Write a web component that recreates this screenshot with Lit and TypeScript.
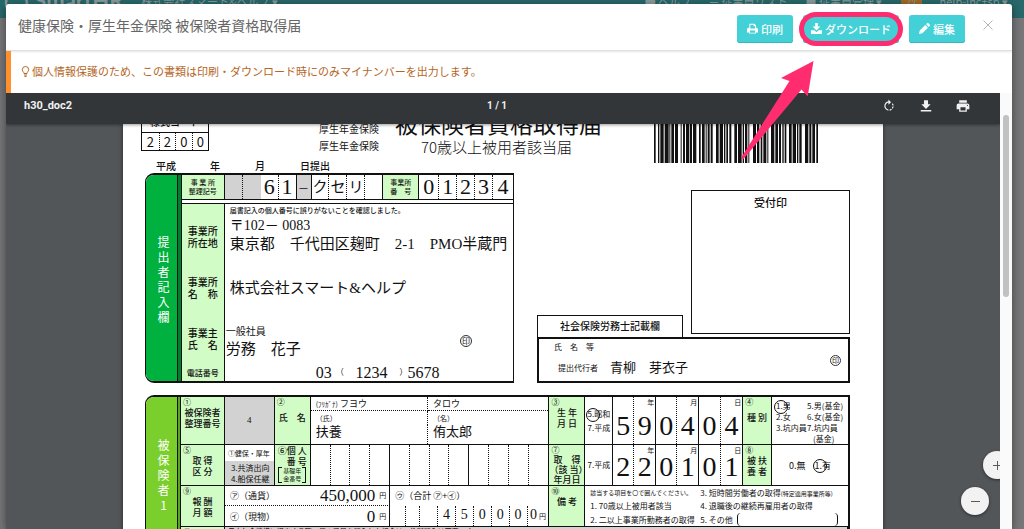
import { LitElement, html, css, svg } from "lit";
import { customElement } from "lit/decorators.js";

const sharedText = css`
  * { box-sizing: border-box; }
  .mincho { font-family: "Liberation Serif", "Noto Sans CJK JP", serif; font-weight: 400; color: #111; }
`;

/* Bars of the form's identification code: [offset, width] */
const BARS: [number, number][] = [
  [0, 5], [12, 4], [19, 10], [32, 12], [46, 3], [52, 8], [63, 9], [80, 3], [87, 6], [96, 10],
  [108, 6], [117, 10], [135, 5], [144, 8], [155, 3], [161, 6], [170, 6], [186, 8], [197, 10],
  [210, 4], [217, 5], [226, 6], [241, 8], [252, 11], [266, 4], [273, 7], [283, 3], [297, 9],
  [309, 7], [320, 5], [328, 9], [340, 3], [351, 10], [364, 8], [375, 6], [385, 4], [392, 5],
  [405, 8], [416, 10], [429, 4], [436, 7], [453, 10], [466, 6], [475, 8], [487, 5],
];

@customElement("form-sheet")
class FormSheet extends LitElement {
  static styles = [sharedText, css`
    :host {
      display: block;
      width: 100%;
      max-width: 760px;
      margin: -16px auto 0;
      padding: 0 33px 0 22px;
      box-sizing: border-box;
      background: #fff;
      color: #111;
      font: 500 10px/12px "Noto Sans CJK JP", sans-serif;
      box-shadow: 0 0 4px rgba(0, 0, 0, 0.5);
      white-space: nowrap;
    }
    .head {
      display: grid;
      grid-template-columns: 64fr 110fr 76fr 259fr 164fr 32fr;
      grid-template-rows: 43px 8px 14px;
    }
    .code { margin-left: -4px; border: 1px solid #111; text-align: center; }
    .code-name { line-height: 23px; border-bottom: 1px solid #111; padding-top: 1px; height: 24px; }
    .code-digits { display: grid; grid-template-columns: repeat(4, 1fr); font-size: 13px; line-height: 17px; font-weight: 400; }
    .code-digits span + span { border-left: 1px dotted #111; }
    .kinds { grid-column: 3; line-height: 17px; padding-top: 12px; font-weight: 400; }
    .titles { grid-column: 4; }
    h1 { margin: 0; font-size: 23px; line-height: 31px; font-weight: 400; }
    h2 { margin: 0; padding-left: 26px; font-size: 15px; line-height: 15px; font-weight: 300; }
    .barcode { grid-column: 5; grid-row: 1 / 4; width: 100%; height: 55px; display: block; }
    .date { grid-column: 1 / 5; grid-row: 3; display: grid; grid-template-columns: 54fr 45fr 45fr 354fr; padding-left: 11px; line-height: 14px; }

    .upper { display: grid; grid-template-columns: 369fr 23fr 313fr; }
    .office {
      display: grid;
      grid-template-columns: 31fr 5fr 332fr;
      border: 1px solid #111;
      border-width: 2px 1px 2px 1px;
      border-radius: 9px 0 0 9px;
      overflow: hidden;
      height: 210px;
    }
    .band {
      display: flex;
      justify-content: center;
      align-items: center;
      background: #00b140;
      color: #fff;
      font-size: 12px;
      line-height: 15px;
      font-weight: 400;
      padding-left: 4px;
    }
    .band p { margin: 0; width: 12px; white-space: normal; word-break: break-all; text-align: center; }
    .stripe { background: #00802e; border: solid #111; border-width: 0 1px; }
    .row1 {
      display: grid;
      grid-template-columns: 43fr 18fr 18fr 18fr 18fr 15fr 18fr 18fr 18fr 18fr 36fr 20fr 18fr 18fr 18fr 20fr;
      height: 25px;
      border-bottom: 1px solid #111;
    }
    .row1 > * { display: flex; align-items: center; justify-content: center; min-width: 0; border-right: 1px solid #111; }
    .row1 > .dot { border-right: 1px dotted #111; }
    .row1 > .open { border-right: 0; }
    .row1 .label { font-size: 7px; line-height: 9px; }
    .label { background: #d2fcc6; text-align: center; }
    .grey { background: #d2d2d2; }
    .num { font-size: 22px; line-height: 24px; }
    .kana { font-size: 15px; }
    .body {
      margin-top: 3px;
      border-top: 1px solid #111;
      display: grid;
      grid-template-columns: 43fr 289fr;
      grid-template-rows: 57px 54px 48px 20px;
    }
    .body > .label { border-right: 1px solid #111; display: flex; flex-direction: column; justify-content: center; line-height: 12px; }
    .body > .label.first { padding-top: 8px; }
    .body > .small { font-size: 8px; }
    .val { padding-left: 5px; }
    .tight { padding-left: 1px; }
    .tiny { font-size: 7px; line-height: 13px; }
    .m12 { font-size: 13px; line-height: 18px; }
    .m14 { font-size: 14px; line-height: 18px; }
    .m15 { font-size: 15px; line-height: 18px; }
    .val.mid { display: flex; align-items: center; }
    .owner { display: flex; justify-content: space-between; align-items: center; padding: 4px 41px 0 0; }
    .owner.tight { padding-left: 1px; }
    .owner .post { line-height: 16px; }
    .seal { display: inline-flex; align-items: center; justify-content: center; width: 12px; height: 12px; border: 1px solid #333; border-radius: 50%; font-size: 8px; line-height: 10px; font-weight: 400; }
    .phone { display: grid; grid-template-columns: 20fr 20fr 44fr 8fr 106fr; padding-left: 91px; line-height: 20px; font-size: 16px; }
    .phone .paren { font-size: 8px; }

    .side { grid-column: 3; display: grid; grid-template-columns: 146fr 8fr 159fr; grid-template-rows: 17px 125px 19px 3px 46px; }
    .stamp { grid-area: 2 / 3 / 4 / 4; border: 1px solid #111; text-align: center; font-size: 11px; line-height: 22px; }
    .tab { grid-area: 3 / 1 / 5 / 2; border: 1px solid #111; border-bottom: 0; text-align: center; line-height: 20px; }
    .agent { grid-area: 5 / 1 / 6 / 4; border: 2px solid #111; display: grid; grid-template-columns: 71fr 220fr 18fr; grid-template-rows: 16px 1fr; align-items: center; font-size: 8px; font-weight: 400; }
    .agent .who { grid-column: 1; padding-left: 15px; }
    .agent .role { grid-column: 1; padding-left: 19px; }
    .agent .name { font-size: 13px; }
    .agent .seal { width: 11px; height: 11px; font-size: 7px; grid-area: 1 / 3 / 3 / 4; justify-self: start; }

    .person {
      display: grid;
      grid-template-columns: 31fr 4fr 44fr 50fr 36fr 239fr 36fr 28fr 43fr 43fr 44fr 29fr 76fr;
      grid-template-rows: 48px 41px 41px 32px;
      margin-top: 12px;
      border: solid #111;
      border-width: 2px 2px 0 1px;
      border-radius: 9px 0 0 0;
      overflow: hidden;
      font-size: 9px;
      line-height: 11px;
    }
    .person .band { grid-row: 1 / 5; background: #7bcf2c; align-items: flex-start; padding-top: 40px; }
    .person .stripe { grid-row: 1 / 5; background: #5da51e; }
    .cell { border: solid #111; border-width: 0 1px 1px 0; min-width: 0; }
    .last { border-right: 0; }
    .mark { display: block; line-height: 10px; font-size: 8px; text-align: left; padding-left: 2px; font-weight: 400; }
    .lines { display: block; }
    .one { line-height: 22px; }
    .dense { line-height: 10px; }
    .centre { display: flex; align-items: center; justify-content: center; }
    .opts { display: flex; flex-direction: column; font-size: 8px; line-height: 11px; font-weight: 400; }
    .opts .white { line-height: 16px; padding-left: 3px; font-size: 7px; }
    .opts .grey { flex: 1; padding: 1px 0 0 6px; }
    .bracket { display: flex; justify-content: center; gap: 1px; font-size: 6px; line-height: 8px; font-weight: 400; }
    .bracket::before, .bracket::after { content: ""; width: 3px; border: 1px solid #111; }
    .bracket::before { border-right: 0; }
    .bracket::after { border-left: 0; }
    .names { display: grid; grid-template-columns: 118fr 121fr; grid-template-rows: 14px 14px 19px; }
    .names > * { padding-left: 5px; }
    .names > :nth-child(odd) { border-right: 1px dotted #111; }
    .names .ruby { border-bottom: 1px dotted #111; font-weight: 400; line-height: 14px; }
    .names .hint { font-size: 7px; line-height: 14px; font-weight: 400; }
    .names .m12 { line-height: 14px; }
    .digits { display: grid; grid-template-columns: repeat(12, 1fr); }
    .digits span { border-right: 1px dotted #111; }
    .digits span:nth-child(4n) { border-right-style: solid; }
    .digits span:last-child { border-right: 0; }
    .era { display: flex; flex-direction: column; justify-content: center; align-items: center; font-size: 8px; line-height: 14px; font-weight: 400; }
    .ring { position: relative; }
    .ring::after { content: ""; position: absolute; left: -2px; top: 50%; width: 12px; height: 12px; margin-top: -6px; border: 1px solid #111; border-radius: 50%; }
    .pair { display: grid; grid-template-columns: 1fr 1fr; grid-template-rows: 100%; }
    .pair .big { grid-row: 1; align-self: end; text-align: center; font-size: 28px; line-height: 36px; }
    .pair .a { grid-column: 1; border-right: 1px dotted #111; height: 100%; display: flex; align-items: flex-end; justify-content: center; }
    .pair .b { grid-column: 2; }
    .pair .unit { grid-area: 1 / 2; justify-self: end; align-self: start; font-size: 7px; line-height: 10px; padding-right: 1px; font-weight: 400; }
    .sex { display: grid; grid-template-columns: 31fr 41fr; padding: 3px 0 0 4px; font-size: 8px; line-height: 11px; font-weight: 400; align-content: start; }
    .sex .end { grid-column: 2; padding-left: 6px; }
    .dep { gap: 9px; font-weight: 400; }
    .pay { grid-column: 4 / 7; display: grid; grid-template-columns: 166fr 159fr; grid-template-rows: 20px 20px; }
    .line { display: flex; align-items: center; padding: 0 3px 0 5px; border-right: 1px solid #111; font-weight: 400; }
    .line.top { border-bottom: 1px dotted #111; }
    .line .amount { margin-left: auto; font-size: 17px; }
    .yen { font-size: 7px; margin-left: 4px; }
    .total { grid-area: 1 / 2 / 3 / 3; display: flex; flex-direction: column; justify-content: space-between; padding-left: 5px; font-weight: 400; }
    .total .caption { line-height: 20px; }
    .sum { display: grid; grid-template-columns: 10fr 14fr 18fr 18fr 18fr 18fr 18fr 18fr 22fr; font-size: 14px; line-height: 18px; text-align: center; }
    .sum > * { min-width: 0; }
    .sum > * + * { border-left: 1px dotted #111; }
    .sum .yen { font-size: 7px; margin-left: 2px; }
    .notes { grid-column: 8 / 14; display: grid; grid-template-columns: 110fr 148fr; grid-template-rows: 13px 14px 13px; font-size: 8px; line-height: 13px; padding-left: 5px; font-weight: 400; }
    .notes .lead { font-size: 6px; }
    .notes small { font-size: 6px; }
    .other { display: flex; gap: 4px; padding-right: 10px; }
    .other i { flex: 1; border: 1px solid #111; border-width: 0 1px; border-radius: 4px; }
    .foot { grid-column: 4 / 14; background: #d2d2d2; font-size: 7px; line-height: 9px; padding-left: 3px; }
  `];

  private date(a: string, b: string, unit: string) {
    return html`<div class="cell pair">
      <span class="big a mincho">${a}</span><span class="unit">${unit}</span><span class="big b mincho">${b}</span>
    </div>`;
  }

  render() {
    return html`
      <header class="head">
        <div class="code">
          <div class="code-name">様式コード</div>
          <div class="code-digits">${[..."2200"].map((d) => html`<span>${d}</span>`)}</div>
        </div>
        <div class="kinds">厚生年金保険<br />厚生年金保険</div>
        <div class="titles"><h1>被保険者資格取得届</h1><h2>70歳以上被用者該当届</h2></div>
        <svg class="barcode" viewBox="0 0 492 55" preserveAspectRatio="none" aria-hidden="true">
          ${BARS.map(([x, w]) => svg`<rect x=${x} y="0" width=${w} height="55" fill="#111" />`)}
        </svg>
        <div class="date"><span>平成</span><span>年</span><span>月</span><span>日提出</span></div>
      </header>

      <div class="upper">
        <section class="office">
          <div class="band"><p>提出者記入欄</p></div>
          <div class="stripe"></div>
          <div>
            <div class="row1">
              <div class="label">事 業 所<br />整理記号</div>
              <span class="grey dot"></span><span class="grey open"></span>
              <span class="num mincho dot">6</span><span class="num mincho">1</span>
              <span class="grey">—</span>
              <span class="kana mincho dot">ク</span><span class="kana mincho dot">セ</span><span class="kana mincho dot">リ</span>
              <span></span>
              <div class="label">事業所<br />番　号</div>
              <span class="num mincho dot">0</span><span class="num mincho dot">1</span><span class="num mincho dot">2</span>
              <span class="num mincho dot">3</span><span class="num mincho open">4</span>
            </div>
            <div class="body">
              <div class="label first">事業所<br />所在地</div>
              <div class="val">
                <div class="tiny">届書記入の個人番号に誤りがないことを確認しました。</div>
                <div class="m14 mincho">〒102－ 0083</div>
                <div class="m15 mincho">東京都　千代田区麹町　2-1　PMO半蔵門</div>
              </div>
              <div class="label">事業所<br />名　称</div>
              <div class="val mid m15 mincho">株式会社スマート&amp;ヘルプ</div>
              <div class="label">事業主<br />氏　名</div>
              <div class="tight owner">
                <div class="mincho"><div class="post">一般社員</div><div class="m15">労務　花子</div></div>
                <span class="seal">印</span>
              </div>
              <div class="label small">電話番号</div>
              <div class="phone mincho">
                <span>03</span><span class="paren">（</span><span>1234</span><span class="paren">）</span><span>5678</span>
              </div>
            </div>
          </div>
        </section>

        <section class="side">
          <div class="stamp">受付印</div>
          <div class="tab">社会保険労務士記載欄</div>
          <div class="agent">
            <span class="who">氏　名　等</span>
            <span class="role">提出代行者</span>
            <span class="name mincho">青柳　芽衣子</span>
            <span class="seal">印</span>
          </div>
        </section>
      </div>

      <section class="person">
        <div class="band"><p>被保険者1</p></div>
        <div class="stripe"></div>

        <div class="cell label"><span class="mark">①</span><span class="lines">被保険者<br />整理番号</span></div>
        <div class="cell grey centre mincho">4</div>
        <div class="cell label"><span class="mark">②</span><span class="lines one">氏　名</span></div>
        <div class="cell names">
          <span class="ruby"><span class="hint">(ﾌﾘｶﾞﾅ)</span> フヨウ</span><span class="ruby">タロウ</span>
          <span class="hint">（氏）</span><span class="hint">（名）</span>
          <span class="m12 mincho">扶養</span><span class="m12 mincho">侑太郎</span>
        </div>
        <div class="cell label"><span class="mark">③</span><span class="lines">生 年<br />月 日</span></div>
        <div class="cell era"><span class="ring">5.昭和</span><span>7.平成</span></div>
        ${this.date("5", "9", "年")}${this.date("0", "4", "月")}${this.date("0", "4", "日")}
        <div class="cell label"><span class="mark">④</span><span class="lines one">種 別</span></div>
        <div class="cell last sex">
          <span class="ring">1.男</span><span>5.男(基金)</span>
          <span>2.女</span><span>6.女(基金)</span>
          <span>3.坑内員</span><span>7.坑内員</span>
          <span class="end">(基金)</span>
        </div>

        <div class="cell label"><span class="mark">⑤</span><span class="lines">取 得<br />区 分</span></div>
        <div class="cell opts"><div class="white">①健保・厚年</div><div class="grey">3.共済出向<br />4.船保任継</div></div>
        <div class="cell label">
          <span class="lines">⑥個 人<br />　番 号</span>
          <span class="bracket">基礎年<br />金番号</span>
        </div>
        <div class="cell digits">${Array.from({ length: 12 }, () => html`<span></span>`)}</div>
        <div class="cell label dense"><span class="mark">⑦</span>取　得<br />（該 当）<br />年月日</div>
        <div class="cell era"><span>7.平成</span></div>
        ${this.date("2", "2", "年")}${this.date("0", "1", "月")}${this.date("0", "1", "日")}
        <div class="cell label"><span class="mark">⑧</span><span class="lines">被 扶<br />養 者</span></div>
        <div class="cell last centre dep"><span>0.無</span><span class="ring">1.有</span></div>

        <div class="cell label"><span class="mark">⑨</span><span class="lines">報 酬<br />月 額</span></div>
        <div class="cell pay">
          <div class="line top">㋐（通貨）<span class="amount mincho">450,000</span><span class="yen">円</span></div>
          <div class="total">
            <span class="caption">㋒（合計 ㋐+㋑）</span>
            <div class="sum mincho">
              <span></span><span></span><span></span>
              ${[..."45000"].map((d) => html`<span>${d}</span>`)}
              <span>0<span class="yen">円</span></span>
            </div>
          </div>
          <div class="line">㋑（現物）<span class="amount mincho">0</span><span class="yen">円</span></div>
        </div>
        <div class="cell label"><span class="mark">⑩</span><span class="lines">備 考</span></div>
        <div class="cell last notes">
          <span class="lead">該当する項目を〇で囲んでください。</span><span>3. 短時間労働者の取得<small>(特定適用事業所等)</small></span>
          <span>1. 70歳以上被用者該当</span><span>4. 退職後の継続再雇用者の取得</span>
          <span>2. 二以上事業所勤務者の取得</span><span class="other">5. その他<i></i></span>
        </div>

        <div class="cell label"><span class="mark">⑪</span></div>
        <div class="cell foot">日本年金機構に提出する際、個人番号を記入した場合は、住所記入は不要です。</div>
      </section>
    `;
  }
}

@customElement("app-root")
class AppRoot extends LitElement {
  static styles = [sharedText, css`
    :host {
      display: flex;
      flex-direction: column;
      position: relative;
      height: 100vh;
      overflow: hidden;
      background: #77777a;
      font: 400 11px/16px "Noto Sans CJK JP", sans-serif;
      white-space: nowrap;
    }
    .topbar {
      display: flex;
      align-items: flex-start;
      gap: 18px;
      height: 18px;
      flex: none;
      padding: 0 16px 0 4px;
      background: #28696b;
      color: #8b9c9d;
      line-height: 2px;
    }
    .brand { font: 700 22px/1px "Lato", sans-serif; }
    .topbar .push { margin-left: auto; }
    .badge { background: #a36a28; height: 4px; padding: 0 5px; line-height: 0; }
    .modal {
      flex: 1;
      min-height: 0;
      display: flex;
      flex-direction: column;
      margin: -14px 12px 0 6px;
      background: #fff;
      border-radius: 3px 3px 0 0;
      box-shadow: 0 2px 10px rgba(0, 0, 0, 0.45);
      overflow: hidden;
    }
    .modal-head {
      display: flex;
      align-items: center;
      gap: 10px;
      height: 47px;
      flex: none;
      padding: 3px 18px 0 12px;
      border-bottom: 1px solid #e0e0e0;
      box-shadow: 0 1px 2px rgba(0, 0, 0, 0.1);
    }
    .title { margin: 0 auto 0 0; font-size: 14px; line-height: 20px; font-weight: 400; color: #666; padding-bottom: 8px; }
    button { font: inherit; border: 0; padding: 0; margin: 0; cursor: pointer; }
    .act {
      position: relative;
      display: flex;
      align-items: center;
      gap: 3px;
      height: 28px;
      padding: 0 10px;
      border-radius: 3px;
      background: #43d0d6;
      color: #fff;
      font-weight: 500;
      line-height: 16px;
      box-shadow: inset 0 -1px 0 #35b8be;
    }
    .act svg { width: 11px; height: 11px; fill: currentColor; }
    .act.hot::after { content: ""; position: absolute; inset: -3px -4px; border: 5px solid #ff2d6f; border-radius: 17px; }
    .act.wide { padding: 0 8px; }
    .close { background: none; width: 12px; height: 12px; margin: 0 0 7px 7px; }
    .close svg { display: block; width: 12px; height: 12px; stroke: #b8b8b8; stroke-width: 1; }
    .notice {
      display: flex;
      align-items: center;
      gap: 2px;
      height: 42px;
      flex: none;
      margin: 0;
      padding: 0 0 2px 10px;
      border-left: 5px solid #ff902b;
      color: #b5661f;
    }
    .notice svg { width: 9px; height: 11px; fill: none; stroke: currentColor; }
    .frame { flex: 1; min-height: 0; display: flex; }
    .viewer { flex: 1; min-width: 0; position: relative; overflow: hidden; background: #525659; }
    .toolbar {
      position: relative;
      z-index: 1;
      display: grid;
      grid-template-columns: 1fr auto 1fr;
      align-items: center;
      height: 31px;
      padding: 0 30px 6px 18px;
      background: #323639;
      color: #f1f1f1;
      font: 700 11px/14px "Roboto", sans-serif;
      box-shadow: 0 1px 3px rgba(0, 0, 0, 0.4);
    }
    .toolbar .pages { font-size: 10px; }
    .tools { display: flex; justify-content: flex-end; gap: 23px; }
    .tools button { background: none; color: inherit; }
    .tools svg { display: block; width: 14px; height: 14px; fill: currentColor; }
    .zoom { position: absolute; z-index: 2; width: 28px; height: 28px; border-radius: 50%; background: #f2f2f2; box-shadow: 0 1px 3px rgba(0, 0, 0, 0.5); display: flex; align-items: center; justify-content: center; }
    .zoom svg { width: 11px; height: 11px; stroke: #5a5a5a; stroke-width: 1; fill: none; }
    .in { right: -11px; bottom: 50px; }
    .out { right: 11px; bottom: 14px; }
    .track { width: 12px; padding: 22px 3px 0; background: #fafafa; }
    .thumb { height: 182px; border-radius: 3px; background: #c1c1c1; }
    .arrow { position: absolute; left: 741px; top: 61px; width: 73px; height: 99px; fill: #ff2d6f; z-index: 3; pointer-events: none; }
  `];

  render() {
    return html`
      <header class="topbar">
        <span class="brand">◯ SmartHR</span><span>株式会社スマート&amp;ヘルプ ▾</span>
        <span class="push">● ヘルプ</span><span>☰ 従業員リスト</span><span>■ 従業員管理 ▾</span>
        <span class="badge">ﾌﾘ</span><span>help-inc+sp ▾</span>
      </header>
      <main class="modal">
        <div class="modal-head">
          <h1 class="title">健康保険・厚生年金保険 被保険者資格取得届</h1>
          <button class="act" type="button">
            <svg viewBox="0 0 14 14"><path fill-rule="evenodd" d="M3 1h6.5L11.5 3v3H12a2 2 0 0 1 2 2v4h-2.5v1.5h-9V12H0V8a2 2 0 0 1 2-2h1zM4.2 2.2V7h6V4H8.5V2.2zM3.7 9.5v2.8h6.6V9.5z" /></svg>印刷
          </button>
          <button class="act wide hot" type="button">
            <svg viewBox="0 0 14 14"><path d="M5.3 0h3.4v4.5H12L7 9.5l-5-5h3.3zM0 9.2h4.3L7 11.7l2.7-2.5H14V14H0z" /></svg>ダウンロード
          </button>
          <button class="act" type="button">
            <svg viewBox="0 0 14 14"><path d="M0 14l.9-4.3L8 2.6 11.4 6l-7.1 7.1zM9 1.6l1.3-1.2a1.3 1.3 0 0 1 1.8 0l1.5 1.5a1.3 1.3 0 0 1 0 1.8L12.4 5z" /></svg>編集
          </button>
          <button class="close" type="button" aria-label="閉じる"><svg viewBox="0 0 12 12"><path d="M1.5 1.5l9 9M10.5 1.5l-9 9" /></svg></button>
        </div>
        <p class="notice">
          <svg viewBox="0 0 9 11"><path d="M3 7.5C3 6 1.3 5.500 1.3 3.700a3.2 3.2 0 0 1 6.4 0C7.700 5.500 6 6 6 7.500zM3 9h3M3.500 10.500h2" /></svg>
          個人情報保護のため、この書類は印刷・ダウンロード時にのみマイナンバーを出力します。
        </p>
        <div class="frame">
          <div class="viewer">
            <div class="toolbar">
              <span>h30_doc2</span><span class="pages">1 / 1</span>
              <div class="tools">
                <button type="button" aria-label="回転">
                  <svg viewBox="0 0 24 24"><path d="M15.55 5.55L11 1v3.07C7.06 4.56 4 7.92 4 12s3.05 7.44 7 7.93v-2.02c-2.84-.48-5-2.94-5-5.91s2.16-5.43 5-5.91V10l4.55-4.45zM19.93 11c-.17-1.39-.72-2.73-1.62-3.89l-1.42 1.42c.54.75.88 1.6 1.02 2.47h2.02zM13 17.9v2.02c1.39-.17 2.74-.71 3.9-1.61l-1.44-1.44c-.75.54-1.59.89-2.46 1.03zm3.89-2.42l1.42 1.41c.9-1.16 1.45-2.5 1.62-3.89h-2.02c-.14.87-.48 1.72-1.02 2.48z" /></svg>
                </button>
                <button type="button" aria-label="ダウンロード">
                  <svg viewBox="0 0 24 24"><path d="M20 9h-4.5V2h-7v7H4l8 8zM3 19v2.5h18V19z" /></svg>
                </button>
                <button type="button" aria-label="印刷">
                  <svg viewBox="1 1 22 22"><path d="M19 8H5c-1.66 0-3 1.34-3 3v6h4v4h12v-4h4v-6c0-1.66-1.34-3-3-3zm-3 11H8v-5h8v5zm3-7c-.55 0-1-.45-1-1s.45-1 1-1 1 .45 1 1-.45 1-1 1zm-1-9H6v4h12V3z" /></svg>
                </button>
              </div>
            </div>
            <form-sheet></form-sheet>
            <button class="zoom in" type="button" aria-label="拡大"><svg viewBox="0 0 11 11"><path d="M5.5 1v9M1 5.5h9" /></svg></button>
            <button class="zoom out" type="button" aria-label="縮小"><svg viewBox="0 0 11 11"><path d="M1 5.5h9" /></svg></button>
          </div>
          <div class="track"><div class="thumb"></div></div>
        </div>
      </main>
      <svg class="arrow" viewBox="0 0 73 99" aria-hidden="true"><path d="M72.5 0L40 17l8.5 3L.5 96q-.5 2.5 2 2L60.5 28.5l6.2 7z" /></svg>
    `;
  }
}
